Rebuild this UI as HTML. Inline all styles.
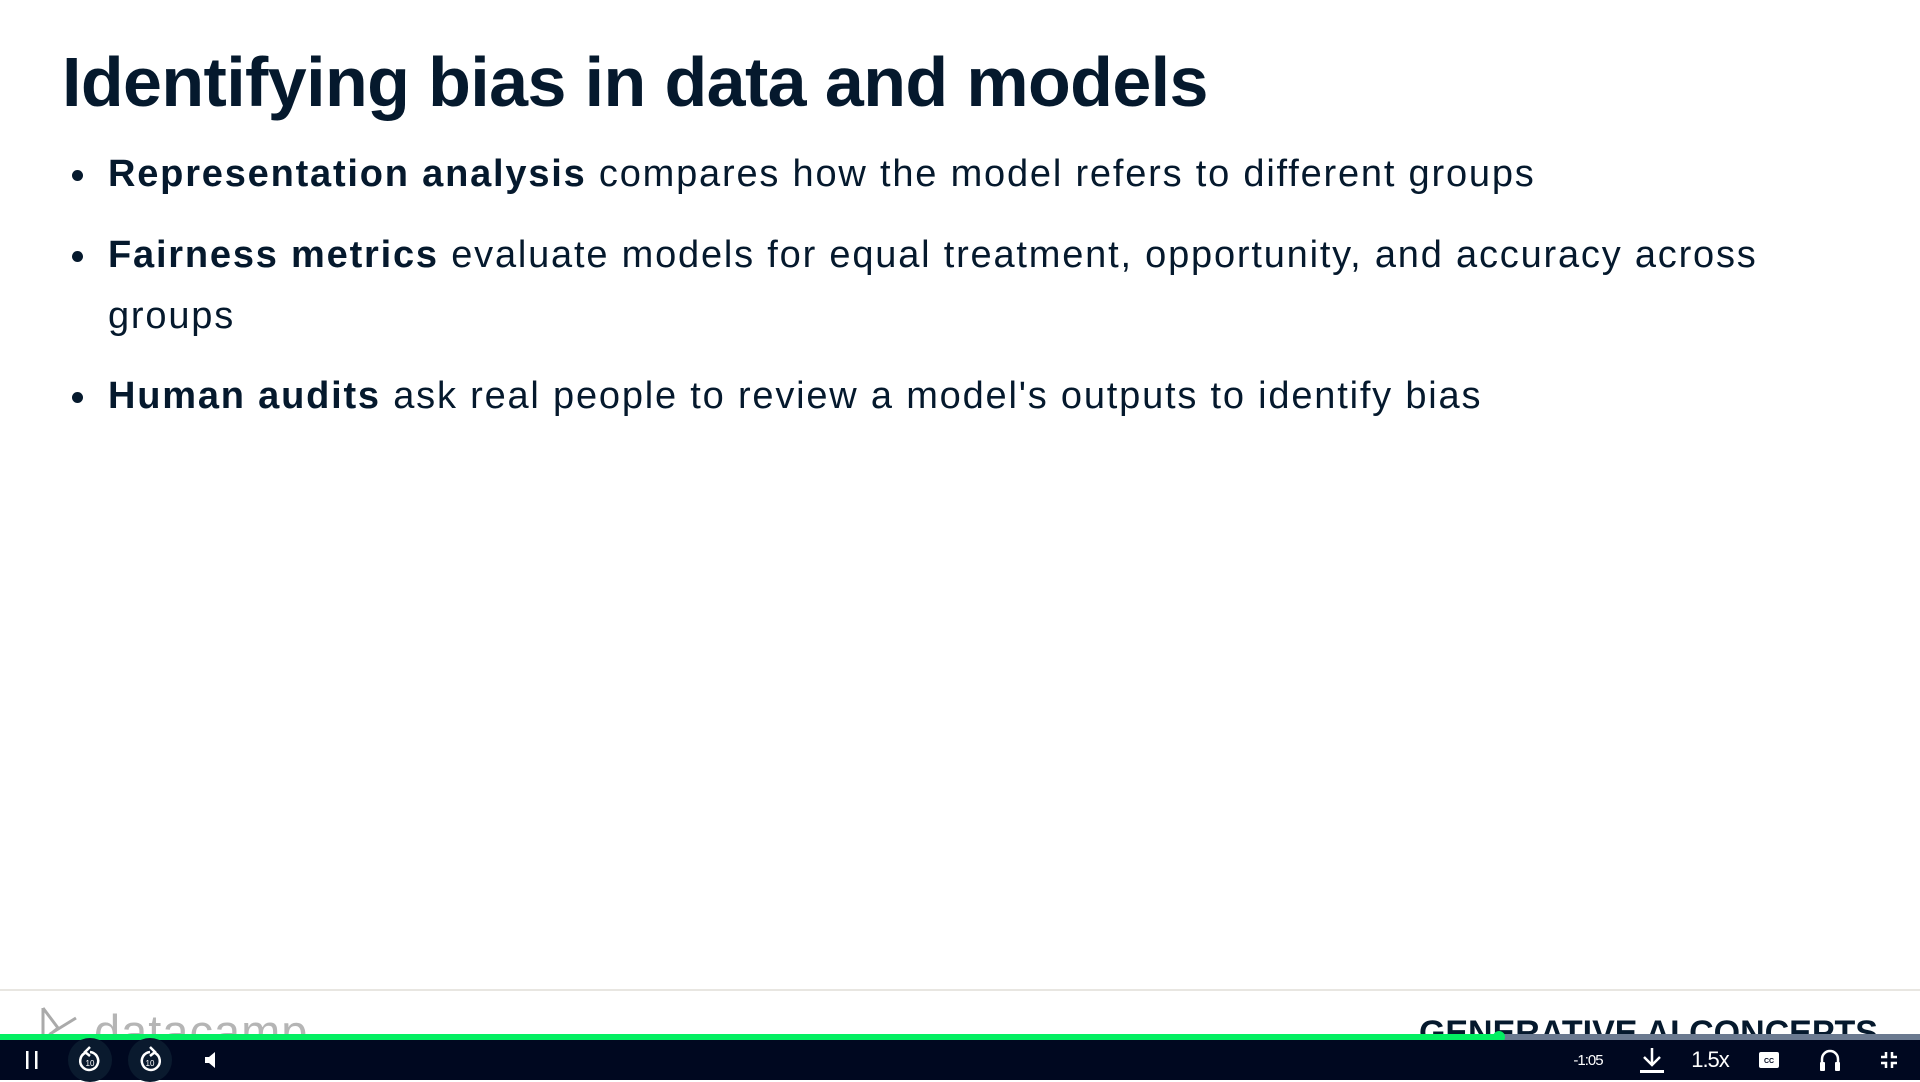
<!DOCTYPE html>
<html><head><meta charset="utf-8"><style>
body{margin:0;width:1920px;height:1080px;background:#fff;position:relative;overflow:hidden;font-family:"Liberation Sans",sans-serif;color:#05192d}
h1{position:absolute;left:62px;top:42px;margin:0;font-size:70px;font-weight:700;letter-spacing:-0.6px;white-space:nowrap}
.b{position:absolute;left:108px;font-size:38px;line-height:61px;white-space:nowrap;letter-spacing:1.8px}
.b:before{content:"";position:absolute;left:-36px;top:26px;width:11px;height:11px;border-radius:50%;background:#05192d}
.line{position:absolute;left:0;top:989px;width:1920px;height:2px;background:#e8e6e1}
.bar{position:absolute;left:0;top:1040px;width:1920px;height:40px;background:#000820}
.ic{position:absolute;top:1040px;height:40px;display:flex;align-items:center;justify-content:center;color:#fff}
</style></head><body>
<h1>Identifying bias in data and models</h1>
<div class="b" style="top:144px"><b>Representation analysis</b> compares how the model refers to different groups</div>
<div class="b" style="top:225px"><b>Fairness metrics</b> evaluate models for equal treatment, opportunity, and accuracy across<br>groups</div>
<div class="b" style="top:366px"><b>Human audits</b> ask real people to review a model's outputs to identify bias</div>
<div class="line"></div>
<svg style="position:absolute;left:40px;top:1006px" width="40" height="40"><path d="M3 2 L3 34 M3 2 L18 22 L3 34 M10 28 L36 12" stroke="#aaa" stroke-width="3" fill="none"/></svg>
<div style="position:absolute;left:94px;top:1004px;font-size:47px;color:#b5b5b5;letter-spacing:1px">datacamp</div>
<div style="position:absolute;right:42px;top:1014px;font-size:34px;font-weight:700;color:#05192d">GENERATIVE AI CONCEPTS</div>
<div style="position:absolute;left:0;top:1034px;width:1499px;height:6px;background:#03ef62"></div>
<div style="position:absolute;left:1499px;top:1034px;width:421px;height:6px;background:#6b7a90"></div>
<div style="position:absolute;left:1493px;top:1031px;width:12px;height:12px;border-radius:50%;background:#03ef62"></div>
<div class="bar"></div>
<div class="ic" style="left:20px;width:24px"><svg width="14" height="20"><rect x="1" y="1" width="2.5" height="18" fill="#fff"/><rect x="10" y="1" width="2.5" height="18" fill="#fff"/></svg></div>
<div class="ic" style="left:68px;width:44px"><div style="width:44px;height:44px;border-radius:50%;background:#0a1a2e;display:flex;align-items:center;justify-content:center"><svg width="28" height="30"><path d="M9 8 A9 9 0 1 0 14 7" stroke="#fff" stroke-width="2.5" fill="none"/><path d="M14 2 L9 7 L14 11" stroke="#fff" stroke-width="2.5" fill="none"/><text x="14" y="21" font-size="8" fill="#fff" text-anchor="middle" font-family="Liberation Sans">10</text></svg></div></div>
<div class="ic" style="left:128px;width:44px"><div style="width:44px;height:44px;border-radius:50%;background:#0a1a2e;display:flex;align-items:center;justify-content:center"><svg width="28" height="30"><path d="M19 8 A9 9 0 1 1 14 7" stroke="#fff" stroke-width="2.5" fill="none"/><path d="M14 2 L19 7 L14 11" stroke="#fff" stroke-width="2.5" fill="none"/><text x="14" y="21" font-size="8" fill="#fff" text-anchor="middle" font-family="Liberation Sans">10</text></svg></div></div>
<div class="ic" style="left:200px;width:20px"><svg width="14" height="18"><path d="M2 6 H6 L12 1 V17 L6 12 H2Z" fill="#fff"/></svg></div>
<div class="ic" style="left:1568px;width:40px;font-size:15px;letter-spacing:-1px">-1:05</div>
<div class="ic" style="left:1638px;width:28px"><svg width="26" height="28"><path d="M13 2 V18 M5 11 L13 19 L21 11" stroke="#fff" stroke-width="2.5" fill="none"/><rect x="1" y="24" width="24" height="3" fill="#fff"/></svg></div>
<div class="ic" style="left:1688px;width:44px;font-size:22px;letter-spacing:-1px">1.5x</div>
<div class="ic" style="left:1758px;width:22px"><svg width="20" height="16"><rect x="0" y="0" width="20" height="16" rx="2" fill="#fff"/><text x="10" y="11" font-size="7" fill="#000820" text-anchor="middle" font-family="Liberation Sans" font-weight="700">CC</text></svg></div>
<div class="ic" style="left:1818px;width:24px"><svg width="22" height="24"><path d="M3 18 V11 A8 8 0 0 1 19 11 V18" stroke="#fff" stroke-width="2.5" fill="none"/><rect x="1" y="14" width="5" height="9" rx="1" fill="#fff"/><rect x="16" y="14" width="5" height="9" rx="1" fill="#fff"/></svg></div>
<div class="ic" style="left:1878px;width:22px"><svg width="18" height="18"><path d="M6 1 V6 H1 M12 1 V6 H17 M6 17 V12 H1 M12 17 V12 H17" stroke="#fff" stroke-width="2.5" fill="none"/></svg></div>
</body></html>
